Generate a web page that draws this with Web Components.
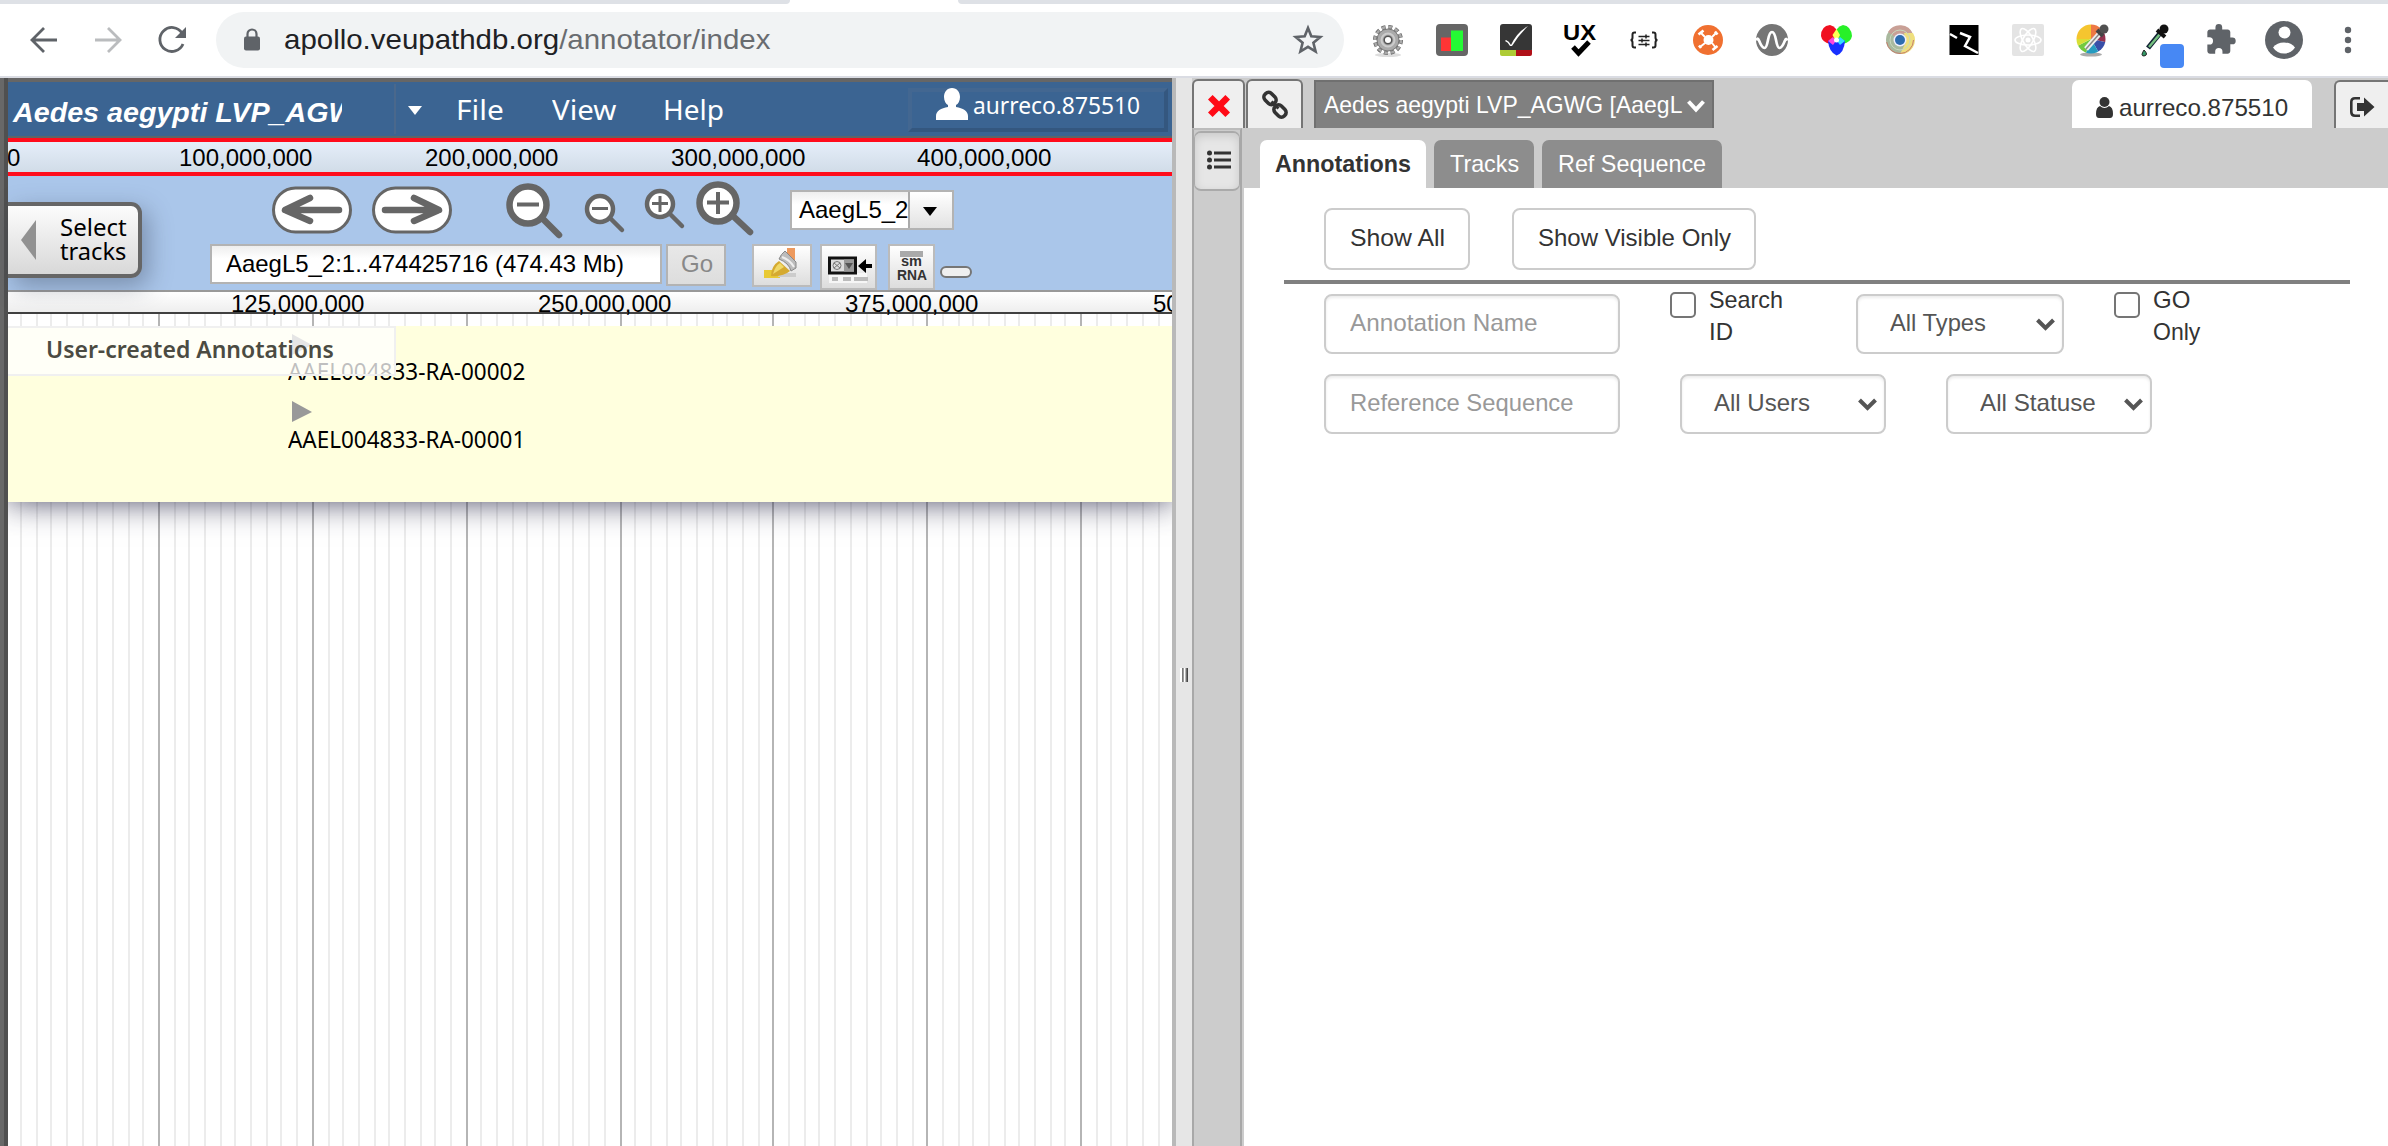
<!DOCTYPE html>
<html lang="en">
<head>
<meta charset="utf-8">
<title>Apollo annotator</title>
<style>
html,body{margin:0;height:100%;overflow:hidden;background:#fff}
body{font-family:"Liberation Sans",Arial,sans-serif;font-size:24px;color:#333}
</style>
</head>
<body>
<apollo-app></apollo-app>

<template id="t-browser">
<style>
:host{display:block;height:78px;background:#fff;box-sizing:border-box;border-bottom:2px solid #dadce3}
.strip{display:flex;justify-content:space-between;height:4px}
.strip i{background:#dee1e6}
.strip i:first-child{width:790px;border-bottom-right-radius:5px}
.strip i:last-child{width:1430px;border-bottom-left-radius:5px}
.row{display:flex;height:72px;align-items:center}
.nav{flex:none;width:216px;height:72px}
.pill{flex:none;display:flex;width:1128px;height:56px;margin-top:0;border-radius:28px;background:#f1f3f4;align-items:center;box-sizing:border-box;padding:0 21px 0 27px}
.pill fit-text{margin:0 auto 0 23px;color:#202124;font-size:28px}
.pill b{font-weight:400;color:#696c70}
.ext{display:flex;margin-left:12px}
svg{display:block;overflow:visible}
.ext svg{width:64px;height:64px;flex:none}
</style>
<div class="strip"><i></i><i></i></div>
<div class="row">
 <svg class="nav" viewBox="0 4 216 72" fill="none" stroke="#5f6368" stroke-width="2.8">
  <path d="M57 40H33M44 28L32 40L44 52"/><path stroke="#babcbe" d="M95 40H119M108 28L120 40L108 52"/>
  <path d="M182 33A12 12 0 1 0 183 44"/><path d="M186 27V38H175Z" fill="#5f6368" stroke="none"/>
 </svg>
 <div class="pill">
  <svg width="18" height="24" viewBox="0 0 18 24"><path d="M4.500 10V6a4.500 4.500 0 0 1 9 0v4" fill="none" stroke="#5f6368" stroke-width="2.200"/><rect x="1" y="8.500" width="16" height="14" rx="2" fill="#5f6368"/></svg>
  <fit-text w="486">apollo.veupathdb.org<b>/annotator/index</b></fit-text>
  <svg width="30" height="30" viewBox="0 0 30 30"><path d="M15 3l3.300 8.300 9 .7-6.900 5.800 2.200 8.700L15 21.800l-7.600 4.700 2.200-8.700L2.700 12l9-.7z" fill="none" stroke="#5f6368" stroke-width="2.600"/></svg>
 </div>
 <div class="ext">
  <svg viewBox="0 0 64 64"><ellipse cx="32" cy="47" rx="13" ry="2" fill="#ddd"/><circle cx="32" cy="32" r="13" fill="none" stroke="#666" stroke-width="4" stroke-dasharray="4 2.800"/><circle cx="32" cy="32" r="13" fill="none" stroke="#aaa" stroke-width="2.500" stroke-dasharray="3.500 3.300"/><circle cx="32" cy="32" r="11" fill="#aaa" stroke="#777"/><circle cx="32" cy="32" r="6.500" fill="none" stroke="#ccc" stroke-width="2"/><circle cx="32" cy="32" r="3.800" fill="#fff" stroke="#555" stroke-width="1.500"/></svg>
  <svg viewBox="0 0 64 64"><rect x="16" y="16" width="32" height="32" rx="4" fill="#666"/><rect x="21" y="29.500" width="10" height="13.500" fill="#ff3535"/><rect x="31" y="22.500" width="12" height="20.500" fill="#24fa34"/></svg>
  <svg viewBox="0 0 64 64"><rect x="16" y="16" width="32" height="28" rx="3" fill="#363636"/><path d="M16 42h16v6H18q-2 0-2-2z" fill="#aecb35"/><path d="M32 42h16v4q0 2-2 2H32z" fill="#b01018"/><path d="M22 32q3 1 5 5Q33 24 44 18Q34 28 28 38H26Q24 34 21 33Z" fill="#fff"/></svg>
  <svg viewBox="0 0 64 64"><text x="15" y="31.500" font-family="Liberation Sans" font-weight="700" font-size="22" textLength="33" lengthAdjust="spacingAndGlyphs" fill="#000">UX</text><path d="M25 39L30.500 45L41 34" fill="none" stroke="#000" stroke-width="5"/></svg>
  <svg viewBox="0 0 64 64" fill="none" stroke="#222" stroke-width="2"><path d="M24 24.500h-1.500q-2 0-2 2v3q0 2.500-2 2.500q2 0 2 2.500v3q0 2 2 2H24M40 24.500h1.500q2 0 2 2v3q0 2.500 2 2.500q-2 0-2 2.500v3q0 2-2 2H40"/><path stroke-width="1.500" d="M26.500 28.500h11M26.500 32.500h11M26.500 36.500h11M34 26.500v4M30 30.500v4M34 34.500v4"/></svg>
  <svg viewBox="0 0 64 64"><circle cx="32" cy="32" r="15" fill="#f07030"/><circle cx="32.500" cy="32" r="5" fill="#fff"/><g fill="none" stroke="#fff" stroke-width="2"><path d="M29 29l-4-4M36 35l4 5M29 35l-5 4M36 29l4-4"/><path stroke-width="2.600" d="M22.500 26.500l5-4M36.500 42l5-4M23 37.500l2 2.500M39 23.500l2.500 3"/></g></svg>
  <svg viewBox="0 0 64 64"><circle cx="32" cy="32" r="16" fill="#757575"/><path d="M16.500 32.500q1-4 2.500 0Q22 40 24.500 40Q26.500 40 28 32T32 24T36 32T39.500 40Q42 40 45 32.500q1-3.500 2.500 0" fill="none" stroke="#fff" stroke-width="2.700"/></svg>
  <svg viewBox="0 0 64 64"><path d="M17 28q0-10 9-11q8 2 8 12q-2 7-8 7q-8-2-9-8z" fill="#f01020"/><path d="M48 28q-1-10-9-11q-8 2-8 12q2 7 8 7q8-2 9-8z" fill="#28f028"/><path d="M24 33q8-7 17 0q-1 12-8.500 14.500Q25 44 24 33z" fill="#1830ff"/><path d="M32.500 21l3.500 6-3.500 7-4-7z" fill="#ff5"/><path d="M24 33l5-4 3 4-3 4z" fill="#f4d"/><path d="M41 33l-5-4-3 4 3 4z" fill="#3df"/><circle cx="32.500" cy="32" r="2.500" fill="#fff"/></svg>
  <svg viewBox="0 0 64 64"><circle cx="32" cy="32" r="14" fill="#a9b99e"/><path d="M32 32L20 24A14 14 0 0 1 45 26H32z" fill="#c9a096"/><path d="M32 46L38 34L36 25H45A14 14 0 0 1 32 46z" fill="#efdf7e"/><circle cx="32" cy="32" r="13.500" fill="none" stroke="#c67d6c" stroke-width="1" stroke-dasharray="40 46"/><circle cx="32" cy="32" r="10" fill="none" stroke="#c9d8bd" stroke-width="1"/><circle cx="32" cy="32" r="6.500" fill="#eef"/><circle cx="32" cy="32" r="5" fill="#2e6db0"/></svg>
  <svg viewBox="0 0 64 64"><rect x="17.500" y="17" width="29" height="30" fill="#000"/><path d="M18 26l7 4M28 25l10 4l-5 9l13 7" fill="none" stroke="#fff" stroke-width="2.500"/></svg>
  <svg viewBox="0 0 64 64"><rect x="16" y="16" width="32" height="32" rx="2" fill="#e4e4e4"/><g fill="none" stroke="#fff" stroke-width="1.600"><ellipse cx="32" cy="32" rx="13" ry="5"/><ellipse cx="32" cy="32" rx="13" ry="5" transform="rotate(60 32 32)"/><ellipse cx="32" cy="32" rx="13" ry="5" transform="rotate(120 32 32)"/></g><circle cx="32" cy="32" r="2.500" fill="#fff"/></svg>
  <svg viewBox="0 0 64 64"><defs><clipPath id="c"><circle cx="31" cy="31" r="14.500"/></clipPath></defs><ellipse cx="31" cy="46.500" rx="11" ry="2" fill="#aaa"/><g clip-path="url(#c)"><path fill="#f5c52f" d="M31 31L10 31L16 12L31 10z"/><path fill="#ee7844" d="M31 31L31 10L50 14z"/><path fill="#94324f" d="M31 31L50 14V35z"/><path fill="#384fa8" d="M31 31L50 35L42 50z"/><path fill="#259bc0" d="M31 31L42 50H24z"/><path fill="#72c940" d="M31 31L24 50L10 42z"/><path fill="#d8df35" d="M31 31L10 42V31z"/></g><path d="M26 41L41 24" stroke="#eee" stroke-width="5"/><path d="M26 41L40 25" stroke="#888" stroke-width="1.500"/><path d="M37 22l6 6" stroke="#444" stroke-width="4"/><circle cx="44" cy="21" r="4.500" fill="#505050"/></svg>
  <svg viewBox="0 0 64 64"><path d="M37 24L24 40" stroke="#123" stroke-width="5"/><path d="M36 26L25 39" stroke="#75c080" stroke-width="2.500"/><circle cx="40" cy="21" r="4.500" fill="#111"/><path d="M33 22l8 7" stroke="#111" stroke-width="4"/><path d="M20 42q5 5 0 6q-4 0 0-6" fill="#396" stroke="#222"/><rect x="36" y="36" width="24" height="24" rx="4" fill="#4788f4"/></svg>
  <svg viewBox="0 0 64 64"><path transform="translate(18 16) scale(1.350)" d="M19.500 10H18V6c0-1.100-.9-2-2-2h-4V2.500a2.500 2.500 0 0 0-5 0V4H3C1.900 4 1 4.900 1 6v3.800h1.500a2.700 2.700 0 0 1 0 5.400H1V20c0 1.100.9 2 2 2h3.800v-1.500a2.700 2.700 0 0 1 5.400 0V22H16c1.100 0 2-.9 2-2v-5h1.500a2.500 2.500 0 0 0 0-5z" fill="#5f6368"/></svg>
  <svg viewBox="0 0 64 64"><circle cx="32" cy="32" r="19" fill="#5f6368"/><circle cx="32.500" cy="24.500" r="6" fill="#fff"/><path d="M21 39.500q4-5 11-5t11 5q-4 6-11 6t-11-6z" fill="#fff"/></svg>
  <svg viewBox="0 0 64 64" fill="#5f6368"><circle cx="32" cy="22" r="3.200"/><circle cx="32" cy="32" r="3.200"/><circle cx="32" cy="42" r="3.200"/></svg>
 </div>
</div>
</template>

<template id="t-genome">
<style>
:host{display:flex;flex-direction:column;width:1172px;height:1068px;box-sizing:border-box;padding-left:8px;background:linear-gradient(90deg,#686868 0 4px,#505050 4px 8px,#fff 8px);overflow:hidden;font-family:"Noto Sans","Open Sans",sans-serif;color:#000}
svg{display:block;flex:none;overflow:visible}
.menu{flex:none;height:54px;border-top:4px solid #666;border-bottom:2px solid #5e6468;background:#3b6492;display:flex;align-items:flex-start;color:#fff;font-size:28px}
.title{width:334px;height:50px;overflow:hidden;font:italic bold 28px "Liberation Sans";padding-left:5px;box-sizing:border-box;flex:none}
.title fit-text{margin-top:16px}
.sep{width:2px;height:50px;margin:2px 12px 0 52px;background:#4a688c}
.user{margin:6px 4px 0 auto;width:260px;height:44px;box-sizing:border-box;border:4px solid;border-color:#436791 #34577f #34577f #436791;display:flex;font-size:24px}
.user svg{margin:-4px 5px 0 24px}
.ruler{flex:none;position:relative;font:24px "Liberation Sans";overflow:hidden}
.ruler fit-text{position:absolute}
.over{height:30px;border:solid #ff0c1c;border-width:4px 0;background:linear-gradient(#e5eef9,#d1dce8)}
.scale{height:20px;border-top:2px solid #999;border-bottom:2px solid #404040;background:linear-gradient(#fff,#eee);overflow:visible;clip-path:inset(-2px 0 -8px 0);z-index:2}
.nav{flex:none;height:114px;background:#aac6ea;display:flex;font-family:"Liberation Sans";align-items:flex-start}
.select{flex:none;display:flex;width:134px;height:76px;margin-top:26px;box-sizing:border-box;border:4px solid #666;border-left:0;border-radius:0 11px 11px 0;background:linear-gradient(#fcfcfc,#d8d8d8);box-shadow:6px 8px 24px rgba(50,60,80,.4);font-family:"Noto Sans";z-index:3}
.select svg{margin:14px 24px 0 13px}
.select div{padding-top:9px}.select fit-text{height:24px;line-height:24px}
.controls{display:flex;flex-direction:column;margin-left:68px}
.r1{display:flex;height:68px;align-items:flex-start}
.r2{display:flex;align-items:flex-start}
.box{box-sizing:border-box;border:2px solid #b3b3b3;background:linear-gradient(#eee,#fff 35%);height:40px}
.loc{width:452px;padding:3px 0 0 14px}
.go{width:60px;height:42px;margin-left:4px;padding:3px 0 0 13px;background:linear-gradient(#e8e8e8,#ddd);color:#888}
.combo{display:flex;width:164px;margin:14px 0 0 38px}
.combo fit-text{margin:3px 0 0 7px}.combo i{margin-left:auto;width:42px;border-left:2px solid #aaa;background:linear-gradient(#fff,#e2e2e2)}.combo svg{margin:15px 13px}
.tool{box-sizing:border-box;border:2px solid #bbb;background:linear-gradient(#fff,#ddd)}
.tracks{display:flow-root;position:relative;flex:1;min-height:0;background:#fff}
.grid{position:absolute;left:0;top:0}
.wrap{position:relative;height:238px;margin-top:12px;overflow:hidden}
.user-track{position:relative;height:176px;background:#ffffde;box-shadow:0 0 30px rgba(40,40,70,.85);font-size:24px}
.user-track>fit-text,.user-track>svg{position:absolute}
.lab{position:absolute;left:0;top:0;width:388px;height:50px;box-sizing:border-box;border:2px solid #f0f0f0;border-left:0;background:rgba(255,255,255,.75);font-weight:600;background-clip:padding-box;color:#4b4b42;padding:6px 0 0 38px}
</style>
<div class="menu">
 <div class="title"><fit-text w="343">Aedes aegypti LVP_AGW</fit-text></div>
 <div class="sep"></div>
 <svg width="14" height="10" style="margin-top:24px"><path d="M0 0h14l-7 9z" fill="#fff"/></svg>
 <fit-text w="48" style="margin:12px 0 0 34px">File</fit-text>
 <fit-text w="64" style="margin:12px 0 0 48px">View</fit-text>
 <fit-text w="61" style="margin:12px 0 0 47px">Help</fit-text>
 <div class="user"><svg width="32" height="32" viewBox="0 0 32 32"><path d="M16 0c5 0 8 4 8 9 0 4-2 7-4 8v2c7 1 12 4 12 9v4H0v-4c0-5 5-8 12-9v-2c-2-1-4-4-4-8 0-5 3-9 8-9z" fill="#fff"/></svg><fit-text w="167" style="margin-top:-2px">aurreco.875510</fit-text></div>
</div>
<div class="ruler over">
 <fit-text w="13" style="left:-1px;top:1px">0</fit-text><fit-text w="133" style="left:171px;top:1px">100,000,000</fit-text><fit-text w="133" style="left:417px;top:1px">200,000,000</fit-text><fit-text w="134" style="left:663px;top:1px">300,000,000</fit-text><fit-text w="134" style="left:909px;top:1px">400,000,000</fit-text>
</div>
<div class="nav">
 <div class="select"><svg width="15" height="40"><path d="M15 0v40L0 20z" fill="#919191"/></svg><div><fit-text w="67">Select</fit-text><fit-text w="66">tracks</fit-text></div></div>
 <div class="controls">
  <div class="r1">
   <svg width="520" height="60" viewBox="210 176 520 60" style="margin-right:22px">
    <g fill="#fff" stroke="#666" stroke-width="3"><rect x="273.500" y="188" width="77" height="44" rx="22"/><rect x="373.500" y="188" width="77" height="44" rx="22"/></g>
    <g fill="none" stroke="#666" stroke-width="6.500" stroke-linecap="round" stroke-linejoin="round"><path d="M339 210H285L310 198M285 210L310 221"/><path d="M385 210H439L414 198M439 210L414 221"/></g>
    <g stroke="#666" stroke-linecap="round" fill="#fff"><g stroke-width="6.500"><path d="M542 218L559 235"/><circle cx="528" cy="205" r="18.500"/><path d="M733 216L750 232"/><circle cx="718" cy="203" r="18.500"/></g><g stroke-width="4.500"><path d="M611 219L622 230"/><circle cx="600" cy="209" r="13"/><path d="M671 215L682 226"/><circle cx="660" cy="204" r="13"/></g>
    <g stroke-width="4" stroke-linecap="butt"><path d="M517 204.500h22M707 202.500h22M718 192v22"/></g><g stroke-width="3" stroke-linecap="butt"><path d="M592 208.500h16M652 203.500h16M660 196v16"/></g></g>
   </svg>
   <div class="box combo"><fit-text w="109">AaegL5_2</fit-text><i><svg width="14" height="9"><path d="M0 0h14L7 9z"/></svg></i></div>
  </div>
  <div class="r2">
   <div class="box loc"><fit-text w="398">AaegL5_2:1..474425716 (474.43 Mb)</fit-text></div>
   <div class="box go"><fit-text w="32">Go</fit-text></div>
   <div class="tool" style="width:60px;height:43px;margin-left:26px"><svg width="56" height="38"><path d="M10 24h16v8H10z" fill="#e8c934"/><path d="M26 27h16v4H24z" fill="#ccc"/><path d="M17 30q0-10 8-15l11 10q-7 6-19 5z" fill="#d5aa30"/><path d="M19 28q2-8 7-11l4 4z" fill="#f0d968"/><path d="M33 2h8v13l-8-7z" fill="#ed995d"/><path d="M25 13q2-5 6-8l11 11v6l-5 3q-2-8-12-12z" fill="#bcbcbc" stroke="#888"/><path d="M28 11q8 3 12 10" fill="none" stroke="#eee" stroke-width="2"/></svg></div>
   <div class="tool" style="width:57px;height:46px;margin-left:8px"><svg width="53" height="42"><path d="M7 27h38v10H7z" fill="#f6f6f6"/><rect x="7.500" y="12" width="26" height="15" fill="#ddd" stroke="#111" stroke-width="3"/><path d="M22 13.500h10v12H22z" fill="#999"/><path d="M23 17h8l-4 6z" fill="#555"/><circle cx="15" cy="19.500" r="4" fill="none" stroke="#777"/><path d="M12 17l6 5M18 17l-6 5" stroke="#777"/><path d="M36 20l8-7v5h6v4h-6v5z"/><path d="M10 33h6M21 33h8M32 33h14" stroke="#bbb" stroke-width="4"/></svg></div>
   <div class="tool" style="width:47px;height:46px;margin-left:11px"><svg width="43" height="42" font-family="Liberation Sans" font-weight="700" fill="#333"><rect x="10" y="5" width="23" height="6" fill="#aaa"/><text x="11" y="20" font-size="14" textLength="21" lengthAdjust="spacingAndGlyphs">sm</text><text x="7" y="34" font-size="15" textLength="30" lengthAdjust="spacingAndGlyphs">RNA</text></svg></div>
   <div style="width:32px;height:12px;margin:22px 0 0 5px;box-sizing:border-box;border:2px solid #767676;border-radius:6px;background:#efefef"></div>
  </div>
 </div>
</div>
<div class="ruler scale">
 <fit-text w="133" style="left:223px;top:-3px">125,000,000</fit-text><fit-text w="133" style="left:530px;top:-3px">250,000,000</fit-text><fit-text w="133" style="left:837px;top:-3px">375,000,000</fit-text><fit-text w="133" style="left:1145px;top:-3px">500,000,000</fit-text>
</div>
<div class="tracks">
 <svg class="grid" width="1164" height="832" shape-rendering="crispEdges"></svg>
 <div class="wrap"><div class="user-track">
  <svg width="21" height="21" style="left:284px;top:8px"><path d="M0 0v21l20-10z" fill="#999"/></svg>
  <svg width="21" height="21" style="left:284px;top:75px"><path d="M0 0v21l20-10z" fill="#999"/></svg>
  <fit-text w="237" style="left:280px;top:30px">AAEL004833-RA-00002</fit-text>
  <fit-text w="237" style="left:280px;top:98px">AAEL004833-RA-00001</fit-text>
  <div class="lab"><fit-text w="288">User-created Annotations</fit-text></div>
 </div></div>
</div>
</template>

<template id="t-split">
<style>
:host{display:flex;flex:none;width:20px;box-sizing:border-box;border-left:4px solid #b9b9b9;background:#e6e6e6;align-items:flex-start;justify-content:center}
i{width:8px;height:14px;margin-top:590px;background:linear-gradient(90deg,#fff 0 20%,#666 25%,#aaa 48%,#fff 50% 60%,#888 75%,#333)}
</style><i></i>
</template>

<template id="t-panel">
<style>
:host{display:flex;flex:1;min-width:0;flex-direction:column;height:1068px;background:#ccc}
svg{display:block;flex:none;overflow:visible}
.top{flex:none;display:flex;height:50px;overflow:hidden;align-items:flex-start;background:#ccc}
.btn{flex:none;box-sizing:border-box;border:2px solid #757575;border-bottom:0;border-radius:6px 6px 0 0;background:#efefef;height:49px;margin-top:1px;display:flex;align-items:center;justify-content:center}
.org{display:flex;width:400px;height:48px;box-sizing:border-box;border:2px solid #707070;border-bottom:0;background:#808080;color:#fff;margin:2px 0 0 11px;padding:8px 0 0 8px}
.org svg{margin:9px 0 0 5px}
.who{display:flex;width:240px;height:48px;margin:2px 22px 0 auto;background:#fff;border-radius:7px 7px 0 0;padding:13px 0 0 24px;box-sizing:border-box}
.out{width:54px;border-radius:6px 0 0 0;border-right:0;justify-content:flex-start;padding-left:14px;margin-top:2px;height:48px}
.main{display:flex;flex:1;min-height:0}
.side{flex:none;box-sizing:border-box;width:50px;border:2px solid #a8a8a8;border-top:2px solid #bbb;border-bottom:0}
.list{display:flex;width:46px;height:60px;box-sizing:border-box;border:2px solid #aaa;border-left:1px solid #aaa;border-right:1px solid #aaa;border-radius:7px;background:#e6e6e6;box-shadow:inset 0 3px 10px rgba(0,0,0,.13);align-items:center;justify-content:center;margin-top:1px}
.list svg{margin:-2px 0 0 3px}
.body{flex:1;min-width:0;display:flex;flex-direction:column}
.tabs{flex:none;display:flex;height:48px;padding:12px 0 0 18px;gap:8px}
.page{flex:1;margin-left:2px;background:#fff;padding:20px 38px 0 40px;box-sizing:border-box}
.buttons{display:flex;gap:42px;padding-left:40px;height:72px}
hr{margin:0 0 10px;border:0;height:4px;background:#808080}
.filters{display:flex;align-items:flex-start;height:80px;padding-left:40px}
</style>
<div class="top">
 <div class="btn" style="width:53px"><svg width="20" height="20" viewBox="0 0 20 20" style="margin-top:3px"><path d="M3.600 3.600l12.800 12.800M16.400 3.600L3.600 16.400" stroke="#ff0a16" stroke-width="6.500" stroke-linecap="square"/></svg></div>
 <div class="btn" style="width:57px;margin-left:1px"><svg width="26" height="28" viewBox="0 0 26 28" fill="none" stroke="#333" stroke-width="3.600"><rect x="1.500" y="3" width="13" height="9" rx="4" transform="rotate(45 8 7.500)"/><rect x="11.500" y="15.500" width="13" height="9" rx="4" transform="rotate(45 18 20)"/><path d="M9.500 10.500l7 7" stroke-width="3"/></svg></div>
 <div class="org"><fit-text w="358">Aedes aegypti LVP_AGWG [AaegL</fit-text><svg width="18" height="14" viewBox="0 0 18 14"><path d="M1.500 2.500L9 10.500L16.500 2.500" fill="none" stroke="#fff" stroke-width="4"/></svg></div>
 <div class="who"><svg width="17" height="21" viewBox="0 0 17 21" fill="#333" style="margin-top:4px"><circle cx="8.500" cy="5" r="5"/><path d="M4 9q4.500 4 9 0q4 1 4 8q0 4-3 4H3q-3 0-3-4q0-7 4-8z"/></svg><fit-text w="169" style="margin-left:6px">aurreco.875510</fit-text></div>
 <div class="btn out"><svg width="25" height="20" viewBox="0 0 25 20" style="margin-top:4px"><path d="M10 1.300H5Q1.300 1.300 1.300 5V15Q1.300 18.700 5 18.700H10" fill="none" stroke="#333" stroke-width="2.600"/><path d="M7 6h7V0.500L24.500 10L14 19.500V14H7z" fill="#333"/></svg></div>
</div>
<div class="main">
 <div class="side"><div class="list"><svg width="24" height="20" viewBox="0 0 24 20"><g fill="#333"><circle cx="2.500" cy="3" r="2.500"/><circle cx="2.500" cy="10" r="2.500"/><circle cx="2.500" cy="17" r="2.500"/><path d="M7 1.500h17v3H7zM7 8.500h17v3H7zM7 15.500h17v3H7z"/></g></svg></div></div>
 <div class="body">
  <div class="tabs">
   <panel-tab active style="width:166px"><fit-text w="136">Annotations</fit-text></panel-tab>
   <panel-tab style="width:100px"><fit-text w="69">Tracks</fit-text></panel-tab>
   <panel-tab style="width:180px"><fit-text w="148">Ref Sequence</fit-text></panel-tab>
  </div>
  <div class="page">
   <div class="buttons">
    <form-box plain style="width:146px;height:62px"><fit-text w="95">Show All</fit-text></form-box>
    <form-box plain style="width:244px;height:62px"><fit-text w="193">Show Visible Only</fit-text></form-box>
   </div>
   <hr>
   <div class="filters">
    <form-box style="width:296px;color:#999"><fit-text w="187">Annotation Name</fit-text></form-box>
    <check-item style="margin-left:50px;width:110px"><fit-text w="74">Search</fit-text><fit-text w="24">ID</fit-text></check-item>
    <form-box menu style="width:208px;margin-left:76px"><fit-text w="96">All Types</fit-text></form-box>
    <check-item style="margin-left:50px"><fit-text w="37">GO</fit-text><fit-text w="47">Only</fit-text></check-item>
   </div>
   <div class="filters">
    <form-box style="width:296px;color:#999"><fit-text w="224">Reference Sequence</fit-text></form-box>
    <form-box menu style="width:206px;margin-left:60px"><fit-text w="96">All Users</fit-text></form-box>
    <form-box menu style="width:206px;margin-left:60px"><fit-text w="116">All Statuse</fit-text></form-box>
   </div>
  </div>
 </div>
</div>
</template>

<script>
const shadow = (el, html) => { const r = el.attachShadow({mode:'open'}); r.innerHTML = html; return r; };
const fromTemplate = (el, id) => { const r = el.attachShadow({mode:'open'}); r.append(document.getElementById(id).content.cloneNode(true)); return r; };

/* One line of text, condensed or stretched to the width given in "w". */
customElements.define('fit-text', class extends HTMLElement {
  connectedCallback() {
    if (!this.shadowRoot) shadow(this, `<style>:host{display:block;flex:none;height:30px;line-height:30px;white-space:nowrap}
      span{display:inline-block;transform-origin:0 50%}</style><span><slot></slot></span>`);
    const w = +this.getAttribute('w');
    this.style.width = w + 'px';
    requestAnimationFrame(() => this.fit(w));
    this.fit(w);
  }
  fit(w) {
    const s = this.shadowRoot.querySelector('span'), n = s.offsetWidth;
    if (n) s.style.transform = `scaleX(${w / n})`;
  }
});
customElements.define('panel-tab', class extends HTMLElement {
  constructor() { super(); shadow(this, `<style>:host{display:flex;justify-content:center;box-sizing:border-box;height:48px;padding-top:9px;border-radius:7px 7px 0 0;background:#8d8d8d;color:#fff}
    :host([active]){background:#fff;color:#333;font-weight:bold}</style><slot></slot>`); }
});
customElements.define('form-box', class extends HTMLElement {
  constructor() { super(); shadow(this, `<style>:host{display:flex;flex:none;box-sizing:border-box;height:60px;border:2px solid #ccc;border-radius:8px;background:#fff;padding:12px 0 0 24px;box-shadow:inset 0 2px 3px rgba(0,0,0,.08);color:#555}
    :host([plain]){box-shadow:none;color:#333;padding-top:13px}:host([menu]){padding-left:32px}
    svg{display:none;margin:10px 7px 0 auto}:host([menu]) svg{display:block}</style><slot></slot>
    <svg width="19" height="14" viewBox="0 0 19 14"><path d="M1.500 2L9.500 10L17.500 2" fill="none" stroke="#555" stroke-width="4"/></svg>`); }
});
customElements.define('check-item', class extends HTMLElement {
  constructor() { super(); shadow(this, `<style>:host{display:flex;flex:none;margin-top:-2px}i{flex:none;width:26px;height:26px;box-sizing:border-box;border:2px solid #757575;border-radius:5px;background:#fff}
    div{display:flex;flex-direction:column;gap:2px;margin:-7px 0 0 13px}</style><i></i><div><slot></slot></div>`); }
});
customElements.define('browser-bar', class extends HTMLElement { constructor() { super(); fromTemplate(this, 't-browser'); } });
customElements.define('genome-browser', class extends HTMLElement {
  constructor() {
    super();
    const g = fromTemplate(this, 't-genome').querySelector('.grid');
    let out = '';
    for (let k = -9; k < 66; k++) {
      const x = 2 * Math.floor((151 + 15.37 * k) / 2);
      out += `<rect x="${x}" y="0" width="2" height="832" fill="${k % 10 ? '#ececec' : '#b5b5b5'}"/>`;
    }
    g.innerHTML = out;
  }
});
customElements.define('split-bar', class extends HTMLElement { constructor() { super(); fromTemplate(this, 't-split'); } });
customElements.define('annotator-panel', class extends HTMLElement { constructor() { super(); fromTemplate(this, 't-panel'); } });
customElements.define('apollo-app', class extends HTMLElement {
  constructor() { super(); shadow(this, `<style>:host{display:block;width:2388px;height:1146px;overflow:hidden}main{display:flex;height:1068px}genome-browser{flex:none}</style>
    <browser-bar></browser-bar><main><genome-browser></genome-browser><split-bar></split-bar><annotator-panel></annotator-panel></main>`); }
});
</script>
</body>
</html>
